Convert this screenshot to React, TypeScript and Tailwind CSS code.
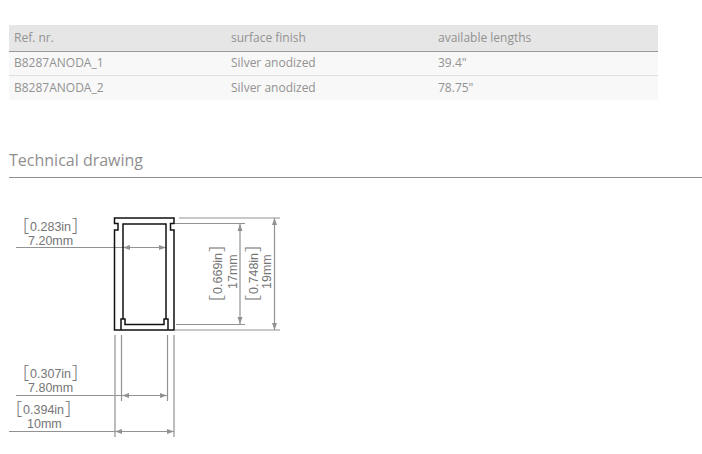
import React from 'react'

const rows = [
  { ref: 'B8287ANODA_1', finish: 'Silver anodized', length: '39.4"' },
  { ref: 'B8287ANODA_2', finish: 'Silver anodized', length: '78.75"' },
]

// bracketed inch label, brackets are thin and taller than the digits
function Inches({ value }: { value: string }) {
  return (
    <>
      <tspan fontFamily="'Open Sans', sans-serif" fontWeight={300} fontSize={19}>[</tspan>
      <tspan dx={1}>{value}</tspan>
      <tspan dx={1} fontFamily="'Open Sans', sans-serif" fontWeight={300} fontSize={19}>]</tspan>
    </>
  )
}

function ProfileDrawing() {
  const dim = '#929292'
  const label = 'fill-[#757575] text-[12.5px]'
  return (
    <svg
      className="block ml-[9px] mt-[27px] w-[290px] h-[240px] font-['Liberation_Sans',Arial,sans-serif]"
      viewBox="9 205 290 240"
    >
      {/* extension lines */}
      <g stroke={dim} strokeWidth="1.2" fill="none">
        <path d="M16 247.5H166" />
        <path d="M179 218H280M174 223.5H245M176 324.5H245M175 330H280" />
        <path d="M115 335V437M121.5 335V401M167.5 335V401M174 335V437" />
        <path d="M16 395.5H167.5M9 431.5H174" />
        <path d="M240 224V324M274.5 218V330" />
      </g>
      {/* arrow heads */}
      <g fill={dim}>
        <path d="M123 247.5l7-2.5v5zM166 247.5l-7-2.5v5z" />
        <path d="M122 395.5l7-2.5v5zM167 395.5l-7-2.5v5z" />
        <path d="M115 431.5l7-2.5v5zM174 431.5l-7-2.5v5z" />
        <path d="M240 224l-2.5 7h5zM240 324l-2.5-7h5z" />
        <path d="M274.5 218l-2.5 7h5zM274.5 330l-2.5-7h5z" />
      </g>
      {/* extrusion outline */}
      <g stroke="#111" fill="none" strokeWidth="1.5">
        <path d="M114.5 218H174V223.5H170.5V230H174V330H114.5V230H118V223.5H114.5Z" />
        <path d="M121 330V319H125V324.5H164V319H168V330" />
        <path d="M123 319V224H166V319" />
      </g>
      {/* labels */}
      <text x={23} y={231} className={label}><Inches value="0.283in" /></text>
      <text x={28} y={245} className={label}>7.20mm</text>
      <text x={23} y={378} className={label}><Inches value="0.307in" /></text>
      <text x={28} y={392} className={label}>7.80mm</text>
      <text x={16} y={414} className={label}><Inches value="0.394in" /></text>
      <text x={27} y={428} className={label}>10mm</text>
      <text transform="translate(222 301) rotate(-90)" className={label}><Inches value="0.669in" /></text>
      <text transform="translate(237 289) rotate(-90)" className={label}>17mm</text>
      <text transform="translate(258 301) rotate(-90)" className={label}><Inches value="0.748in" /></text>
      <text transform="translate(271 289) rotate(-90)" className={label}>19mm</text>
    </svg>
  )
}

export default function App() {
  return (
    <div className="w-[702px] h-[454px] overflow-hidden bg-white pt-[25px] pl-[9px] font-['Open_Sans',sans-serif] text-[#929292]">
      <table className="w-[649px] table-fixed border-collapse text-[12px]">
        <thead>
          <tr className="h-[26px] bg-[#e6e6e6] border-b border-[#9a9a9a]">
            <th className="w-[217px] pl-[5px] pt-[1px] text-left font-normal">Ref. nr.</th>
            <th className="w-[207px] pl-[5px] pt-[1px] text-left font-normal">surface finish</th>
            <th className="pl-[5px] pt-[1px] text-left font-normal">available lengths</th>
          </tr>
        </thead>
        <tbody>
          {rows.map((row) => (
            <tr key={row.ref} className="h-[24.5px] bg-[#f8f8f8] border-b border-[#dfdfdf] last:border-b-0">
              <td className="pl-[5px]">{row.ref}</td>
              <td className="pl-[5px]">{row.finish}</td>
              <td className="pl-[5px]">{row.length}</td>
            </tr>
          ))}
        </tbody>
      </table>

      <h2 className="mt-[49px] pb-[5px] border-b border-[#8f8f8f] text-[16px] leading-[23px] font-normal text-[#8f8f8f]">
        Technical drawing
      </h2>

      <div className="-ml-[9px]">
        <ProfileDrawing />
      </div>
    </div>
  )
}
